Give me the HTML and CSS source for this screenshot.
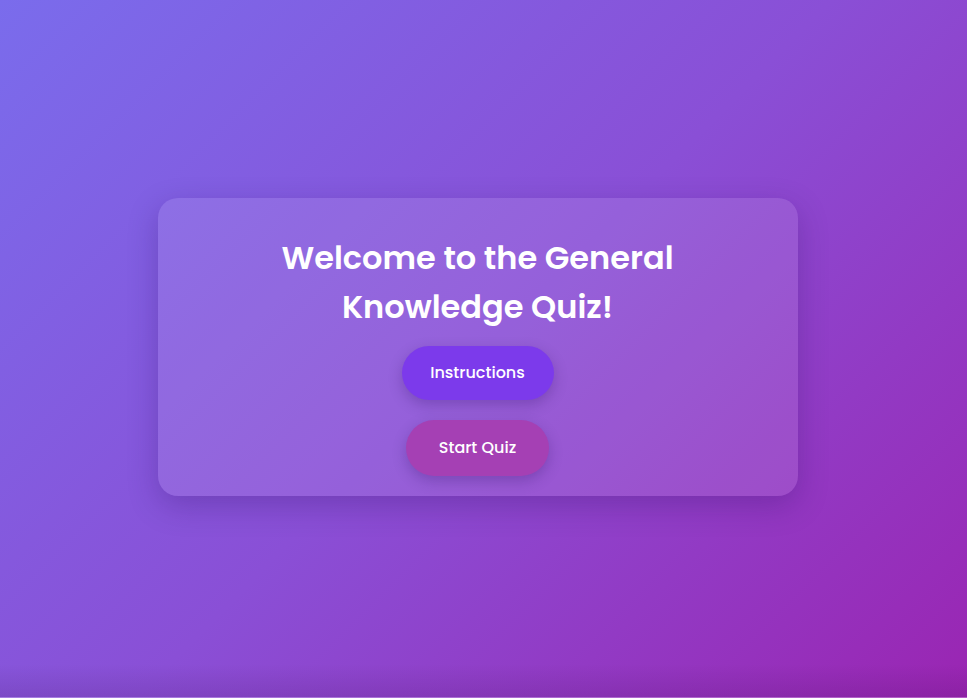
FILE: index.html
```html
<!DOCTYPE html>
<html lang="en">
<head>
<meta charset="utf-8">
<title>General Knowledge Quiz</title>
<link rel="stylesheet" href="styles.css">
</head>
<body>
  <main class="page">
    <section class="card">
      <h1 class="title">Welcome to the General Knowledge Quiz!</h1>
      <button class="btn btn-instructions" type="button">Instructions</button>
      <button class="btn btn-start" type="button">Start Quiz</button>
    </section>
  </main>
</body>
</html>
```

FILE: styles.css
```css
* { box-sizing: border-box; }

html, body {
  margin: 0;
  height: 100%;
}

body {
  font-family: Poppins, "DejaVu Sans", "Open Sans", sans-serif;
  color: #fff;
  background:
    linear-gradient(to bottom, rgba(0,0,0,0) calc(100% - 34px), rgba(40,0,60,0.12) calc(100% - 1px), rgba(255,255,255,0.25) calc(100% - 1px)),
    linear-gradient(135deg, #7a6cec 0%, #8a4fd6 50%, #9a25b2 100%);
}

.page {
  height: 100%;
  display: flex;
  align-items: center;
  justify-content: center;
  padding: 0 12px 4px 0;
}

.card {
  width: 640px;
  padding: 35px 40px 20px;
  border-radius: 20px;
  background: rgba(255, 255, 255, 0.1);
  box-shadow: 0 10px 30px rgba(40, 10, 90, 0.25);
  display: flex;
  flex-direction: column;
  align-items: center;
  gap: 20px;
}

.title {
  margin: 0 0 -5px;
  font-size: 32px;
  line-height: 49px;
  font-weight: 600;
  text-align: center;
}

.btn {
  border: none;
  border-radius: 999px;
  color: #fff;
  font-family: inherit;
  font-size: 16px;
  font-weight: 500;
  line-height: 22px;
  box-shadow: 0 5px 14px rgba(40, 10, 90, 0.25);
  cursor: pointer;
}

.btn-instructions {
  width: 152px;
  height: 54px;
  background: #7c3aeb;
}

.btn-start {
  width: 143px;
  height: 56px;
  background: #a540b4;
}
```
